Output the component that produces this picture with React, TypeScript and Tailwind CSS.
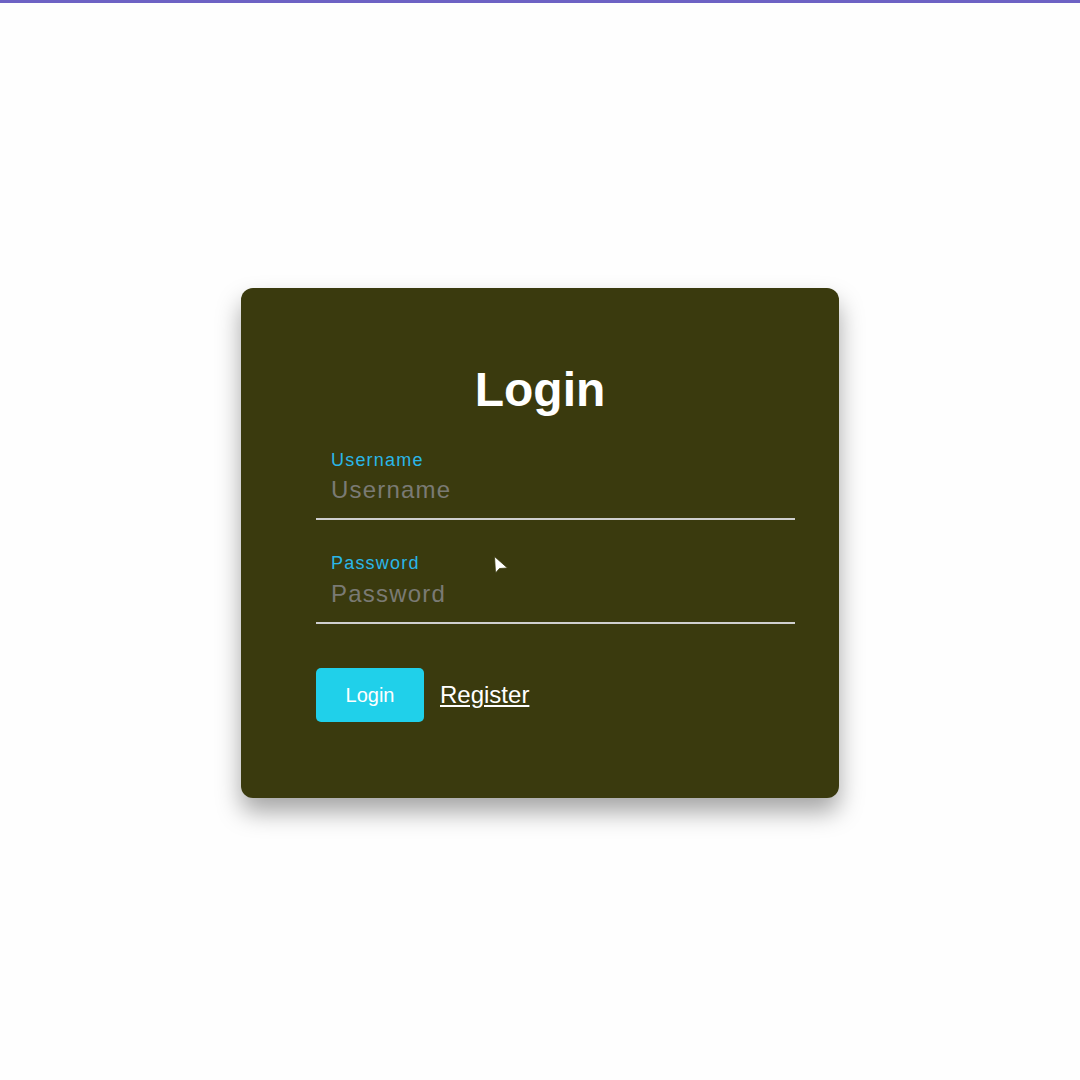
import React from "react";

export default function App() {
  return (
    <div
      className="min-h-screen w-full bg-[#fefefe] border-t-[3px] border-[#6d62c4] pt-[3px] flex items-center justify-center"
      style={{ fontFamily: '"Liberation Sans", Arial, sans-serif' }}
    >
      <div className="relative w-[598px] h-[510px] rounded-[12px] bg-[#3a3a0e] shadow-[0_14px_24px_rgba(0,0,0,0.35)] pt-[74px] pl-[75px] flex flex-col">
        <h1 className="text-[48px] leading-[56px] font-bold text-white text-center -ml-[75px]">
          Login
        </h1>
        <div className="w-[479px] mt-[32px] flex flex-col">
          <div className="flex flex-col border-b-2 border-[#cfcfcf]">
            <label className="pl-[15px] text-[18px] leading-[20px] tracking-[1.2px] text-[#2ab7e8]">
              Username
            </label>
            <div className="pl-[15px] mt-[6px] pb-[14px] text-[24px] leading-[28px] tracking-[1.2px] text-[#7a7a74]">
              Username
            </div>
          </div>
          <div className="mt-[33px] flex flex-col border-b-2 border-[#cfcfcf]">
            <label className="pl-[15px] text-[18px] leading-[20px] tracking-[1.2px] text-[#2ab7e8]">
              Password
            </label>
            <div className="pl-[15px] mt-[7px] pb-[14px] text-[24px] leading-[28px] tracking-[1.2px] text-[#7a7a74]">
              Password
            </div>
          </div>
          <div className="mt-[44px] flex items-center gap-[16px]">
            <button className="w-[108px] h-[54px] rounded-[5px] bg-[#20d0ea] text-white text-[20px]">
              Login
            </button>
            <a className="text-white text-[24px] underline">Register</a>
          </div>
        </div>
        <svg
          className="absolute left-[253px] top-[268px]"
          width="16"
          height="20"
          viewBox="0 0 16 20"
        >
          <path d="M0.5 0.5 L1.5 17 L5.5 12.5 L13.5 12 Z" fill="#ffffff" stroke="#3a3a0e" strokeWidth="0.8" />
        </svg>
      </div>
    </div>
  );
}
